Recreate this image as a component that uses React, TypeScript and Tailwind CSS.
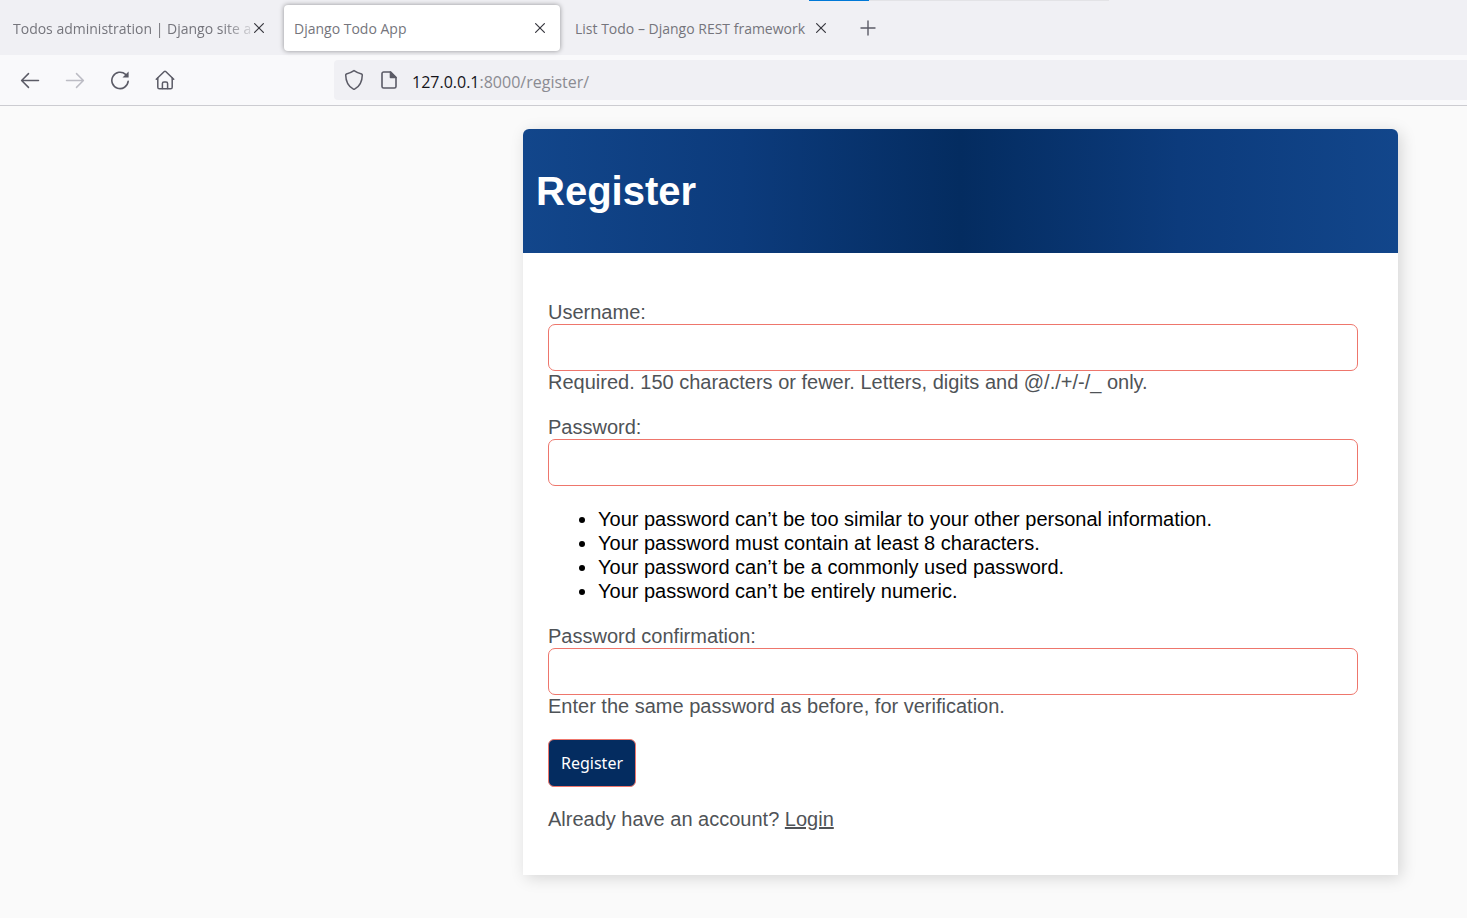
import type { ReactNode } from "react";

function CloseIcon() {
  return (
    <svg width="12" height="12" viewBox="0 0 12 12" fill="none" stroke="currentColor" strokeWidth="1.2" strokeLinecap="round" aria-hidden="true">
      <path d="M1.6 1.6 10.400 10.400M10.400 1.6 1.6 10.400" />
    </svg>
  );
}

function ArrowIcon({ flip = false }: { flip?: boolean }) {
  return (
    <svg width="20" height="20" viewBox="0 0 20 20" fill="none" stroke="currentColor" strokeWidth="1.5" strokeLinecap="round" strokeLinejoin="round" aria-hidden="true">
      {flip ? <path d="M1.5 10.5h16.700M11.500 3.600l6.900 6.900-6.900 6.900" /> : <path d="M18.5 10.5H1.8M8.5 3.6 1.6 10.5l6.9 6.9" />}
    </svg>
  );
}

function ReloadIcon() {
  return (
    <svg width="20" height="20" viewBox="0 0 20 20" fill="none" stroke="currentColor" strokeWidth="1.6" strokeLinecap="round" aria-hidden="true">
      <path d="M18.2 11.2A8.2 8.2 0 1 1 15.6 4.4" />
      <path d="M18.6 1.4v6.1h-6.1z" fill="currentColor" stroke="none" />
    </svg>
  );
}

function HomeIcon() {
  return (
    <svg width="20" height="20" viewBox="0 0 20 20" fill="none" stroke="currentColor" strokeWidth="1.5" strokeLinecap="round" strokeLinejoin="round" aria-hidden="true">
      <path d="M1.3 9.2 9.3 1.5q.7-.6 1.4 0l8 7.7" />
      <path d="M2.8 8v9.2a1.6 1.6 0 0 0 1.6 1.6h11.2a1.6 1.6 0 0 0 1.6-1.6V8" />
      <path d="M7.4 18.6v-5a1.6 1.6 0 0 1 1.6-1.6h2a1.6 1.6 0 0 1 1.6 1.6v5" />
    </svg>
  );
}

function ShieldIcon() {
  return (
    <svg width="20" height="22" viewBox="0 0 20 22" fill="none" stroke="currentColor" strokeWidth="1.5" strokeLinejoin="round" aria-hidden="true">
      <path d="M10 1.6Q13.6 4 17.6 5q.7.3.7 1C18.2 12 15.600 17.500 10.600 20.200q-.6.300-1.200 0C4.400 17.500 1.800 12 1.700 6q0-.7.7-1Q6.400 4 10 1.600z" />
    </svg>
  );
}

function PageIcon() {
  return (
    <svg width="16" height="18" viewBox="0 0 16 18" fill="none" stroke="currentColor" strokeWidth="1.6" strokeLinejoin="round" aria-hidden="true">
      <path d="M9.500 1H2.600A1.600 1.600 0 0 0 1 2.600v12.800A1.600 1.600 0 0 0 2.600 17h10.800a1.600 1.600 0 0 0 1.600-1.600V6.500z" />
      <path d="M9.500 1v5.500H15z" fill="currentColor" />
    </svg>
  );
}

function Tab({ title, active = false, className }: { title: string; active?: boolean; className: string }) {
  return (
    <div
      role="tab"
      aria-selected={active}
      className={`flex h-[46px] items-center justify-between rounded-[4px] text-[14px] leading-6 ${
        active ? "bg-white shadow-[0_0_5px_rgba(0,0,0,0.4)]" : ""
      } ${className}`}
    >
      <span className="pt-0.5 whitespace-nowrap text-[#75757c]">{title}</span>
      <button type="button" aria-label={`Close ${title}`} className="shrink-0 text-[#38383f]">
        <CloseIcon />
      </button>
    </div>
  );
}

function NavButton({ label, disabled = false, children }: { label: string; disabled?: boolean; children: ReactNode }) {
  return (
    <button type="button" aria-label={label} disabled={disabled} className="text-[#5b5b66] disabled:text-[#bcbcc4]">
      {children}
    </button>
  );
}

function Field({ id, label, type, help }: { id: string; label: string; type: string; help?: string }) {
  return (
    <div className="flex flex-col">
      <label htmlFor={id} className="self-start leading-6">
        {label}
      </label>
      <input id={id} name={id} type={type} className="h-[47px] w-full rounded-[7px] border border-[#ee766c] bg-white px-3 outline-none" />
      {help && <p className="leading-[23px]">{help}</p>}
    </div>
  );
}

const passwordRules = [
  "Your password can’t be too similar to your other personal information.",
  "Your password must contain at least 8 characters.",
  "Your password can’t be a commonly used password.",
  "Your password can’t be entirely numeric.",
];

export default function App() {
  return (
    <div className="flex min-h-screen flex-col bg-[#fafafa]">
      <header className="font-['Open_Sans','Noto_Sans',sans-serif]">
        <div className="relative flex h-[55px] items-center bg-[#f0f0f4]" role="tablist">
          <div className="absolute top-0 left-[809px] flex h-px w-[300px] bg-[#e3e3e6]">
            <div className="w-[60px] bg-[#0078d7]" />
          </div>
          <Tab
            title="Todos administration | Django site a"
            className="w-[284px] pr-[19px] pl-[13px] [&>span]:[mask-image:linear-gradient(to_right,black_210px,transparent_246px)]"
          />
          <Tab title="Django Todo App" active className="w-[276px] pr-[14px] pl-[10px]" />
          <Tab title="List Todo – Django REST framework" className="w-[282px] pr-[15px] pl-[15px]" />
          <button type="button" aria-label="New tab" className="ml-[18px] text-[#5b5b66]">
            <svg width="16" height="16" viewBox="0 0 16 16" stroke="currentColor" strokeWidth="1.4" strokeLinecap="round" aria-hidden="true">
              <path d="M8 1v14M1 8h14" />
            </svg>
          </button>
        </div>
        <div className="flex h-[51px] items-center border-b border-[#ccccd1] bg-[#f9f9fb] pl-5">
          <nav className="flex w-[314px] shrink-0 items-center gap-[25px]">
            <NavButton label="Back">
              <ArrowIcon />
            </NavButton>
            <NavButton label="Forward" disabled>
              <ArrowIcon flip />
            </NavButton>
            <NavButton label="Reload">
              <ReloadIcon />
            </NavButton>
            <NavButton label="Home">
              <HomeIcon />
            </NavButton>
          </nav>
          <div className="flex h-10 flex-1 items-center rounded-l-[4px] bg-[#f0f0f4] pl-[10px] text-[#5b5b66]">
            <ShieldIcon />
            <span className="mr-[15px] ml-[17px]">
              <PageIcon />
            </span>
            <span className="pt-1 text-[16px] leading-6 text-[#8b8b92]">
              <span className="text-[#15141a]">127.0.0.1</span>:8000/register/
            </span>
          </div>
        </div>
      </header>

      <main className="flex justify-end pt-[23px] pr-[69px] pb-10 pl-6 font-['Liberation_Sans',Arial,sans-serif] text-[20px]">
        <section className="w-full max-w-[875px] rounded-t-[6px] bg-white shadow-[3px_3px_16px_rgba(0,0,0,0.15)]">
          <div className="flex h-[124px] items-center rounded-t-[6px] bg-[linear-gradient(to_right,#12468b,#0c3b7c_25%,#042c60_50%,#0c3b7c_75%,#12468b)] px-[13px]">
            <h1 className="text-[40px] leading-[46px] font-bold text-white">Register</h1>
          </div>
          <form className="flex flex-col gap-[21px] pt-[47px] pr-10 pb-11 pl-[25px] text-[#4f5357]" onSubmit={(event) => event.preventDefault()}>
            <Field id="username" label="Username:" type="text" help="Required. 150 characters or fewer. Letters, digits and @/./+/-/_ only." />
            <Field id="password1" label="Password:" type="password" />
            <ul className="list-disc pl-[50px] leading-6 text-black">
              {passwordRules.map((rule) => (
                <li key={rule}>{rule}</li>
              ))}
            </ul>
            <Field id="password2" label="Password confirmation:" type="password" help="Enter the same password as before, for verification." />
            <button
              type="submit"
              className="h-12 self-start rounded-[6px] border border-[#ee766c] bg-[#042c60] px-3 font-['Noto_Sans',sans-serif] text-[16px] leading-6 text-white"
            >
              Register
            </button>
            <p className="leading-[23px]">
              Already have an account?{" "}
              <a href="#login" className="underline">
                Login
              </a>
            </p>
          </form>
        </section>
      </main>
    </div>
  );
}
